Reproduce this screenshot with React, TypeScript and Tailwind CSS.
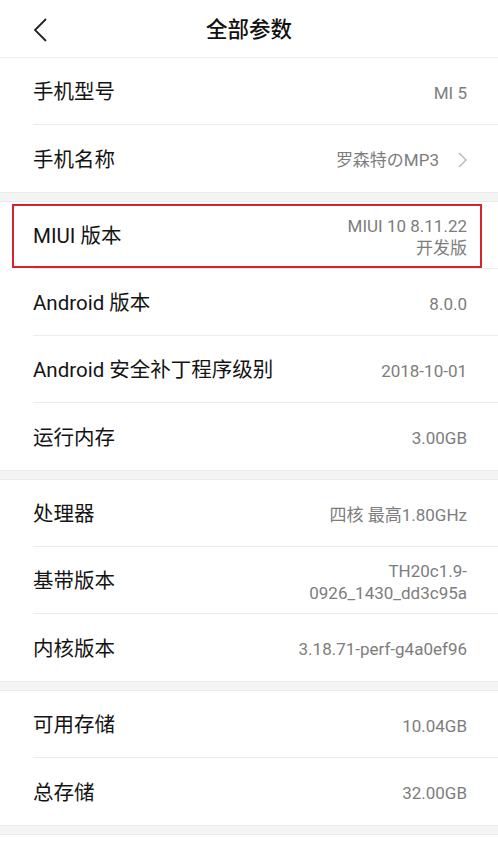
type Row = { label: string; value: string[]; arrow?: boolean; boxed?: boolean };

const sections: Row[][] = [
    [
        { label: "手机型号", value: ["MI 5"] },
        { label: "手机名称", value: ["罗森特のMP3"], arrow: true },
    ],
    [
        { label: "MIUI 版本", value: ["MIUI 10 8.11.22", "开发版"], boxed: true },
        { label: "Android 版本", value: ["8.0.0"] },
        { label: "Android 安全补丁程序级别", value: ["2018-10-01"] },
        { label: "运行内存", value: ["3.00GB"] },
    ],
    [
        { label: "处理器", value: ["四核 最高1.80GHz"] },
        { label: "基带版本", value: ["TH20c1.9-", "0926_1430_dd3c95a"] },
        { label: "内核版本", value: ["3.18.71-perf-g4a0ef96"] },
    ],
    [
        { label: "可用存储", value: ["10.04GB"] },
        { label: "总存储", value: ["32.00GB"] },
    ],
];

function Gap() {
    return <div className="h-[10px] bg-[#f4f4f4] border-y border-[#ebebeb]" />;
}

function InfoRow({ row, last }: { row: Row; last: boolean }) {
    return (
        <div className="relative pl-[33px]">
            <div className={`h-[67px] pt-[3px] flex items-center justify-between pr-[31px] ${last ? "" : "border-b border-[#ececec]"}`}>
                <span className="text-[20.5px] text-[#141414]">{row.label}</span>
                <div className="flex items-center gap-[19px]">
                    <div className="flex flex-col items-end text-[17px] leading-[22px] text-[#7d7d7d]">
                        {row.value.map(v => (
                            <span key={v}>{v}</span>
                        ))}
                    </div>
                    {row.arrow && (
                        <svg width="9" height="16" viewBox="0 0 9 16">
                            <path d="M1 1l7 7-7 7" fill="none" stroke="#b3b3b3" strokeWidth="1.3" />
                        </svg>
                    )}
                </div>
            </div>
            {row.boxed && (
                <div className="absolute left-[12px] right-[16px] top-[2px] bottom-[1px] border-2 border-[#d8232f]" />
            )}
        </div>
    );
}

export default function App() {
    return (
        <main
            className="w-[498px] h-[854px] bg-white overflow-hidden"
            style={{ fontFamily: 'Roboto, "Noto Sans CJK SC", sans-serif' }}
        >
            {/* Title bar */}
            <div className="relative h-[58px] flex items-center justify-center border-b border-[#f0f0f0]">
                <svg width="16" height="24" viewBox="0 0 16 24" className="absolute left-[32px] top-[18px]">
                    <path d="M14 1L3 12l11 11" fill="none" stroke="#222" strokeWidth="1.8" />
                </svg>
                <h1 className="text-[21.5px] font-medium text-[#111] mt-[3px]">全部参数</h1>
            </div>

            {sections.map((rows, si) => (
                <div key={si}>
                    {si > 0 && <Gap />}
                    {rows.map((row, i) => (
                        <InfoRow key={row.label} row={row} last={i === rows.length - 1} />
                    ))}
                </div>
            ))}
            <Gap />
        </main>
    );
}
